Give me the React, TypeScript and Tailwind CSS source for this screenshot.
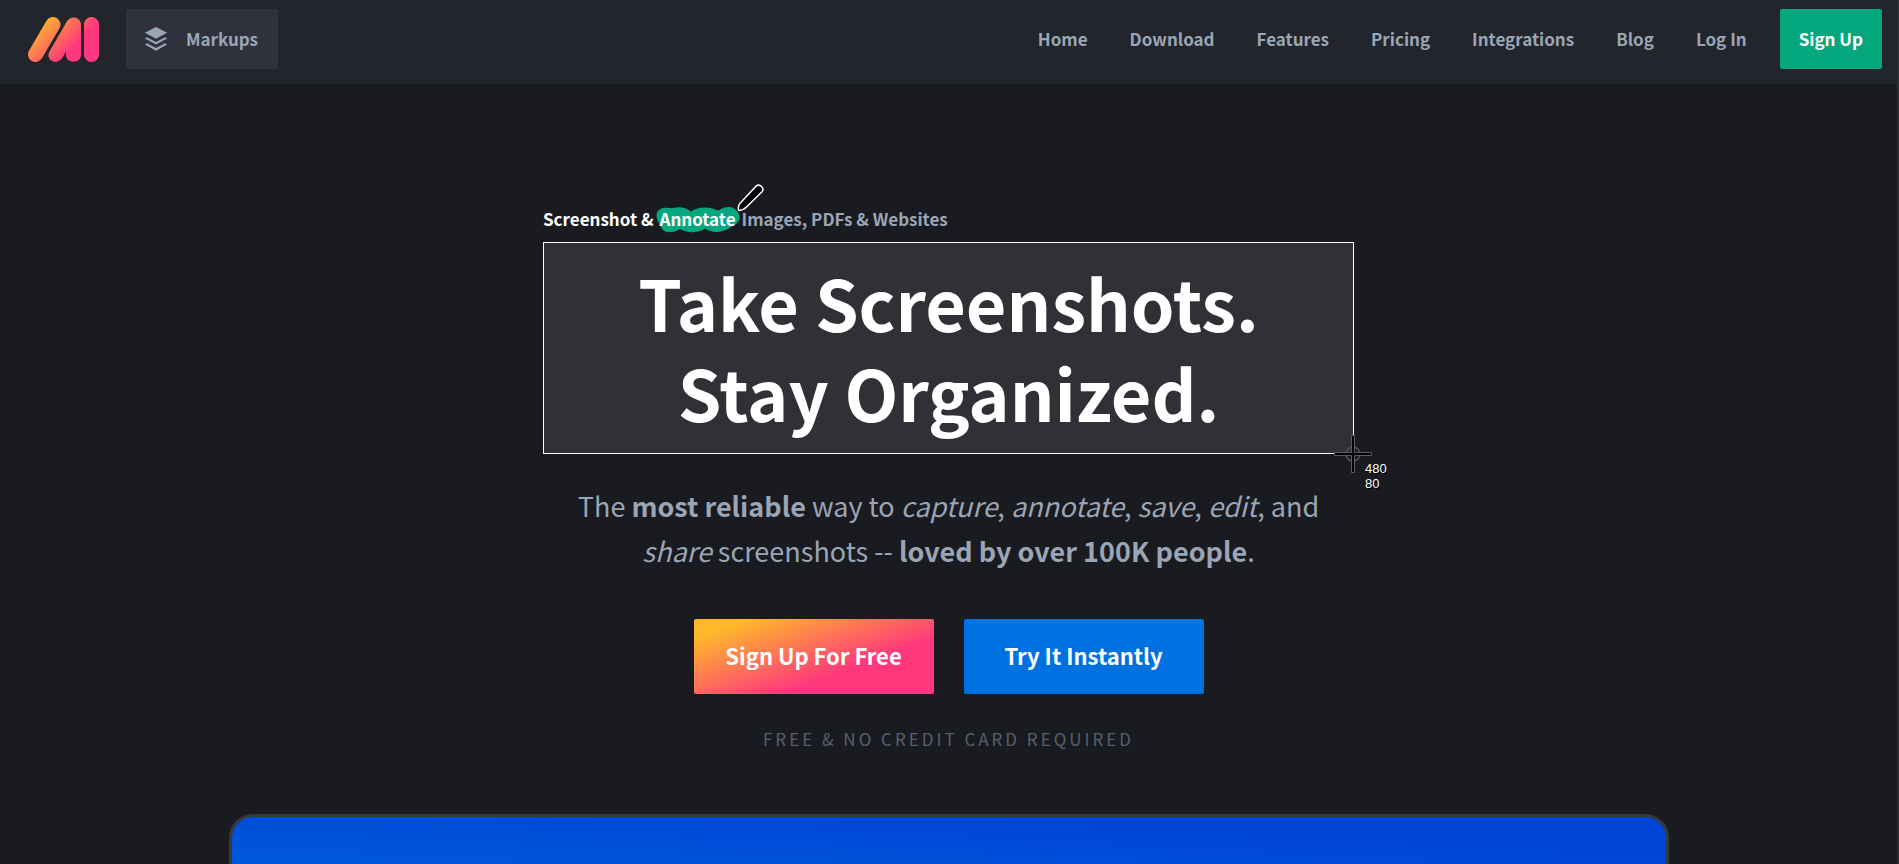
const navLinks = ['Home', 'Download', 'Features', 'Pricing', 'Integrations', 'Blog', 'Log In'];

function Logo() {
  return (
    <svg width="71" height="45" viewBox="0 0 71 45" role="img" aria-label="Markup Hero">
      <defs>
        <linearGradient id="logo" gradientUnits="userSpaceOnUse" x1="15" y1="2" x2="44" y2="31">
          <stop offset="0" stopColor="#fdb92a" />
          <stop offset="1" stopColor="#ff387d" />
        </linearGradient>
      </defs>
      <g stroke="url(#logo)" fill="url(#logo)">
        <path d="M7.5 37.5 25 7.5" strokeWidth="15" strokeLinecap="round" />
        <path
          stroke="none"
          d="M21.5 34.5 39 4.2C42.5-1.8 53-.8 53 8v29.5c0 9.6-15 9.6-15 0v-2.8l-3.6 6.1c-5.2 8.6-17.6 2.2-12.9-6.3Z"
        />
        <rect stroke="none" x="56" y="0" width="15" height="45" rx="7.5" />
      </g>
    </svg>
  );
}

function LayersIcon() {
  return (
    <svg className="w-6 h-6 fill-current" viewBox="0 0 24 24" aria-hidden="true">
      <path d="M12 0 23.2 5.8 12 11.8.8 5.8Z" />
      <path d="M.8 11.4 3 10.3 12 15l9-4.7 2.2 1.1L12 17.6Z" />
      <path d="M.8 17.4 3 16.3 12 21l9-4.7 2.2 1.1L12 23.8Z" />
    </svg>
  );
}

function Header() {
  return (
    <header className="flex items-center justify-between h-[84px] pl-7 pr-[15px] pb-[6px] bg-[#22252c]">
      <div className="flex items-center gap-[27px]">
        <a href="#home">
          <Logo />
        </a>
        <a
          href="#markups"
          className="flex items-center gap-[18px] h-[60px] pl-[18px] pr-5 rounded-xs bg-[#2f323c]"
        >
          <LayersIcon />
          Markups
        </a>
      </div>

      <nav className="flex items-center">
        {navLinks.map((label) => (
          <a key={label} href={`#${label}`} className="px-[21px]">
            {label}
          </a>
        ))}
        <a
          href="#signup"
          className="flex items-center h-[60px] ml-3 px-[19px] rounded-xs bg-[#05a87e] text-white"
        >
          Sign Up
        </a>
      </nav>
    </header>
  );
}

function Pen() {
  return (
    <svg
      className="absolute -top-[22px] left-[78px]"
      width="28"
      height="28"
      viewBox="0 0 28 28"
      fill="#000"
      stroke="#fff"
      strokeWidth="1.5"
      strokeLinejoin="round"
      aria-hidden="true"
    >
      <path d="M19 2.2c3.6-3 9 1.8 6 5.6L9.5 23c-1.6 1.7-3.2 3-7.6 3.4-.8-.4-.8-3.4.1-5.4.6-1.3 1.5-2.2 2.5-3.3Z" />
    </svg>
  );
}

function Eyebrow() {
  return (
    <p className="flex gap-[6px] leading-[26px] font-bold">
      <span className="text-white">Screenshot &amp;</span>
      <span className="relative isolate text-white">
        <svg
          className="absolute -z-10 top-px -left-[3px]"
          width="84"
          height="26"
          viewBox="0 0 84 26"
          aria-hidden="true"
        >
          <path
            fill="#05a87e"
            d="M7 1c4-.8 7 0 10 .3C23-1 30 .5 35 4.500 42-.5 53-1 62 3.500 69-.5 74-.8 78 1.500c4 2 6 6 5.500 10-1 5-6 7.500-11 10C66 25.500 56 26.500 49 21.500c-8 5-18 5-25 .3C18 26 11 26 8 23.800 5 21.500 5 19 2.500 15-1 9 0 3 7 1Z"
          />
        </svg>
        Annotate
        <Pen />
      </span>
      <span>Images, PDFs &amp; Websites</span>
    </p>
  );
}

function Crosshair() {
  return (
    <div className="absolute top-full left-full" aria-hidden="true">
      <svg className="absolute -top-[18px] -left-[19px]" width="38" height="38" viewBox="0 0 38 38" fill="none">
        <circle cx="19" cy="19" r="7" stroke="#505257" strokeWidth="1.5" />
        <path d="M17.5.5h3v17h17v3h-17v17h-3v-17H.5v-3h17Z" fill="#000" stroke="#5c5d61" />
      </svg>
      <div className="absolute top-2 left-3 text-left font-['Liberation_Sans',sans-serif] text-[13px] leading-[15px] font-normal text-white text-shadow-[1px_1px_0_#000]">
        480
        <br />
        80
      </div>
    </div>
  );
}

export default function App() {
  return (
    <div className="flex flex-col min-h-screen border-r-2 border-[#2d2e32] bg-[#1a1b20] font-['Noto_Sans_CJK_SC',sans-serif] text-[17px] font-bold text-[#9aa5b5]">
      <Header />

      <main className="flex flex-col flex-1 items-center px-4 pt-[122px]">
        <div className="w-full max-w-[811px] text-center">
          <Eyebrow />
          <div className="relative mt-[10px] px-4 pt-[14px] pb-4 border border-white bg-[#303136]">
            <h1 className="text-[70px] leading-[90px] text-white">
              Take Screenshots.
              <br />
              Stay Organized.
            </h1>
            <Crosshair />
          </div>

          <p className="mt-[29px] px-8 text-[27px] leading-[45px] font-normal">
            The <b>most reliable</b> way to <em>capture</em>, <em>annotate</em>, <em>save</em>,{' '}
            <em>edit</em>, and <em>share</em> screenshots -- <b>loved by over 100K people</b>.
          </p>

          <div className="flex justify-center gap-[30px] mt-[46px] text-[22px] text-white">
            <button className="w-[240px] h-[75px] pb-[2px] rounded-xs bg-[linear-gradient(160deg,#fdb92a_12%,#ff387d_66%)]">
              Sign Up For Free
            </button>
            <button className="w-[240px] h-[75px] pb-[2px] rounded-xs bg-[#0071e1]">
              Try It Instantly
            </button>
          </div>

          <p className="mt-[30px] leading-[30px] font-normal tracking-[3px] text-[#56606d]">
            FREE &amp; NO CREDIT CARD REQUIRED
          </p>
        </div>

        <div className="flex-1 w-full max-w-[1440px] mt-[60px] rounded-t-3xl border-[3px] border-b-0 border-[#37393e] bg-[linear-gradient(183deg,#0045d5_30%,#0059de)]" />
      </main>
    </div>
  );
}
